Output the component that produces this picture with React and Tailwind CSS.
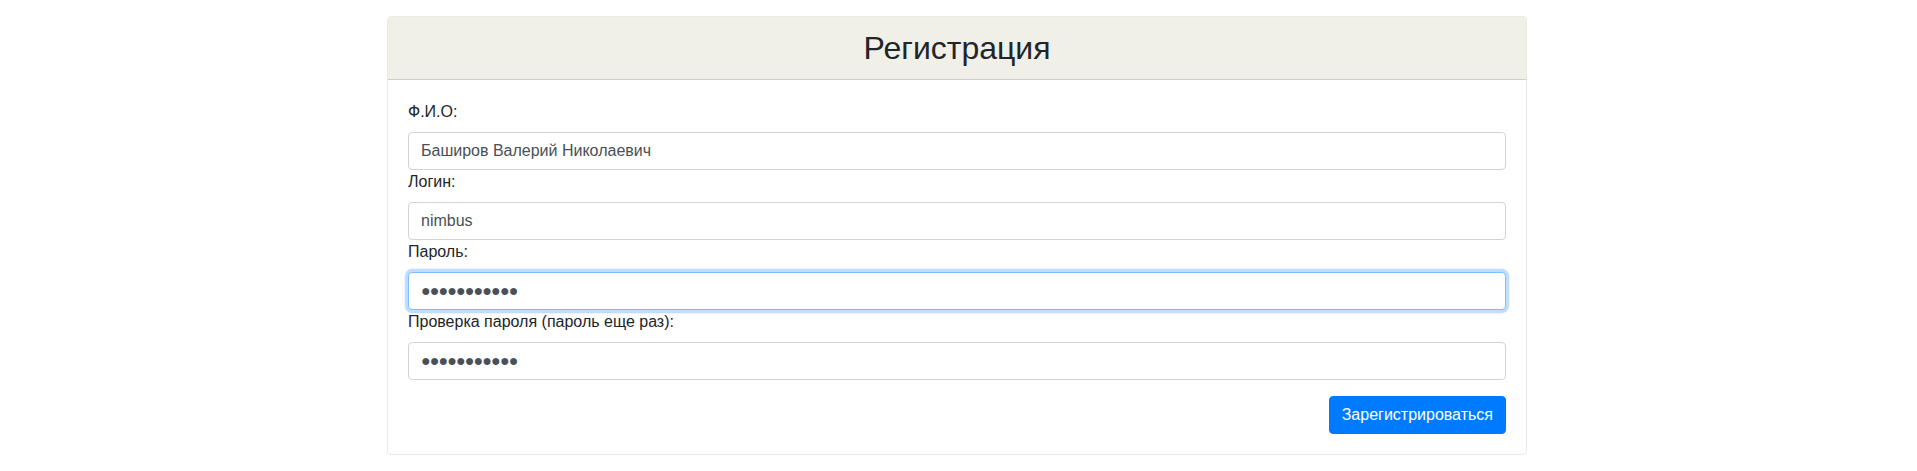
export default function App() {
  const inputBase =
    "block w-full h-[38px] px-3 py-1.5 text-base leading-6 text-[#495057] bg-white border border-[#ced4da] rounded outline-none";

  return (
    <div className="min-h-screen bg-white pt-4 pr-[3px] font-['Liberation_Sans',Arial,sans-serif] text-[#212529]">
      <div className="w-[1140px] mx-auto">
        <div className="bg-white border border-[#ebeae2] rounded">
          <div className="bg-[#f0efe8] border-b border-[#cfcfcf] px-5 py-3 rounded-t">
            <h2 className="text-[32px] leading-[38.4px] text-center font-normal">
              Регистрация
            </h2>
          </div>
          <form className="p-5" onSubmit={(e) => e.preventDefault()}>
            <label className="block text-base leading-6 mb-2">Ф.И.О:</label>
            <input
              type="text"
              className={inputBase}
              defaultValue="Баширов Валерий Николаевич"
            />
            <label className="block text-base leading-6 mb-2">Логин:</label>
            <input type="text" className={inputBase} defaultValue="nimbus" />
            <label className="block text-base leading-6 mb-2">Пароль:</label>
            <input
              type="text"
              className="block w-full h-[38px] px-3 py-1.5 text-base leading-6 tracking-[-0.9px] text-[#495057] bg-white border border-[#80bdff] rounded outline-none shadow-[0_0_0_3.2px_rgba(0,123,255,0.25)]"
              defaultValue="●●●●●●●●●●●"
            />
            <label className="block text-base leading-6 mb-2">
              Проверка пароля (пароль еще раз):
            </label>
            <input
              type="text"
              className={inputBase + " tracking-[-0.9px]"}
              defaultValue="●●●●●●●●●●●"
            />
            <div className="flex justify-end mt-4">
              <button
                type="submit"
                className="h-[38px] px-3 text-base leading-6 text-white bg-[#007bff] rounded border border-[#007bff]"
              >
                Зарегистрироваться
              </button>
            </div>
          </form>
        </div>
      </div>
    </div>
  );
}
